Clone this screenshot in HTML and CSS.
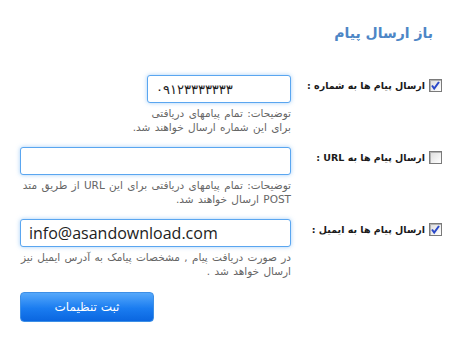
FILE: index.html
```html
<!DOCTYPE html>
<html lang="fa" dir="rtl">
<head>
    <meta charset="UTF-8">
    <title>باز ارسال پیام</title>
    <link rel="stylesheet" href="styles.css">
</head>
<body>
    <div class="page">
        <h1 class="title">باز ارسال پیام</h1>

        <div class="row">
            <label class="opt">
                <span class="check">
                    <svg width="13" height="13" viewBox="0 0 13 13"><path d="M3 6.5 L5.2 9.5 L10 3" fill="none" stroke="#2a48c8" stroke-width="2"/></svg>
                </span>
                <span class="opt-text">ارسال پیام ها به شماره :</span>
            </label>
            <div class="field">
                <input class="box box-short" type="text" dir="ltr" value="۰۹۱۲۳۳۳۳۳۳۳">
                <p class="hint">توضیحات: تمام پیامهای دریافتی<br>برای این شماره ارسال خواهند شد.</p>
            </div>
        </div>

        <div class="row">
            <label class="opt">
                <span class="check"></span>
                <span class="opt-text">ارسال پیام ها به URL :</span>
            </label>
            <div class="field">
                <input class="box" type="text" dir="ltr" value="">
                <p class="hint">توضیحات: تمام پیامهای دریافتی برای این URL از طریق متد<br>POST ارسال خواهند شد.</p>
            </div>
        </div>

        <div class="row">
            <label class="opt">
                <span class="check">
                    <svg width="13" height="13" viewBox="0 0 13 13"><path d="M3 6.5 L5.2 9.5 L10 3" fill="none" stroke="#2a48c8" stroke-width="2"/></svg>
                </span>
                <span class="opt-text">ارسال پیام ها به ایمیل :</span>
            </label>
            <div class="field">
                <input class="box box-mail" type="text" dir="ltr" value="info@asandownload.com">
                <p class="hint">در صورت دریافت پیام , مشخصات پیامک به آدرس ایمیل نیز<br>ارسال خواهد شد .</p>
            </div>
        </div>

        <div class="actions">
            <button class="save">ثبت تنظیمات</button>
        </div>
    </div>
</body>
</html>
```

FILE: styles.css
```css
body {
    margin: 0;
    background-color: #ffffff;
    font-family: "DejaVu Sans", sans-serif;
}

.page {
    width: 459px;
    box-sizing: border-box;
    padding: 23px 17px 0 20px;
}

.title {
    margin: 0 9px 32px 0;
    font-size: 14px;
    line-height: 20px;
    font-weight: bold;
    color: #4d86c6;
}

.row {
    display: flex;
    align-items: flex-start;
    margin-bottom: 13px;
}

.opt {
    width: 151px;
    flex-shrink: 0;
    display: flex;
    align-items: center;
    gap: 4px;
    padding-top: 4px;
    font-size: 9.5px;
    font-weight: bold;
    color: #1a1a1a;
}

.check {
    width: 13px;
    height: 13px;
    box-sizing: border-box;
    border: 1px solid #7a7a7a;
    background: linear-gradient(135deg, #dcdcdc, #ffffff);
    box-shadow: inset 1px 1px 0 #b0b0b0;
    display: flex;
}

.check svg {
    margin: -1px;
}

.field {
    flex: 1;
    min-width: 0;
}

.box {
    display: block;
    width: 271px;
    height: 28px;
    box-sizing: border-box;
    margin: 0;
    border: 1px solid #5aa6f0;
    border-radius: 3px;
    box-shadow: 0 0 4px rgba(90, 166, 240, 0.55);
    padding: 0 8px;
    font-family: "Open Sans", sans-serif;
    font-size: 16px;
    color: #222222;
    outline: none;
}

.box-short {
    width: 144px;
    font-family: "DejaVu Sans", sans-serif;
    font-size: 13px;
}

.hint {
    margin: 3px 0 0 0;
    font-size: 10.5px;
    line-height: 14px;
    word-spacing: 1px;
    white-space: nowrap;
    color: #666666;
}

.actions {
    display: flex;
    justify-content: flex-end;
    padding-top: 1px;
}

.save {
    width: 134px;
    height: 30px;
    border: 1px solid #3d8fe6;
    border-radius: 4px;
    background: linear-gradient(#55a8fb, #1a7cf0 55%, #0a66e0);
    color: #ffffff;
    font-family: "DejaVu Sans", sans-serif;
    font-size: 12px;
    cursor: pointer;
}
```
